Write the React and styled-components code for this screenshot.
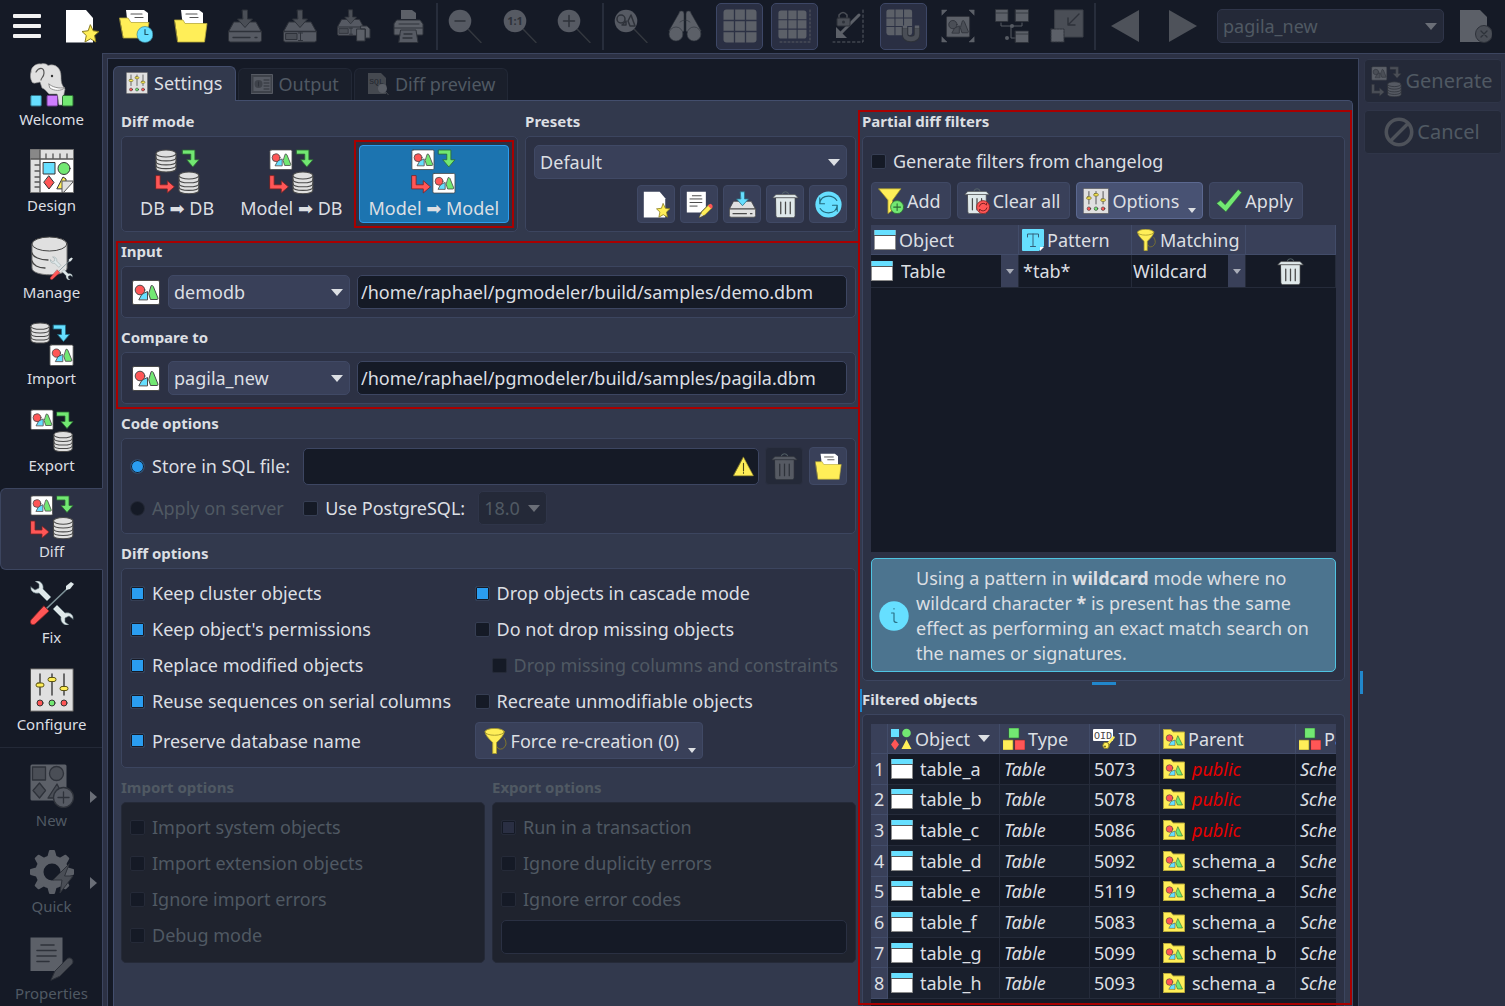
import React from "react";
import styled, { createGlobalStyle, css } from "styled-components";

const c = {
  dark: "#151a26",
  darkAlt: "#191f2c",
  panel: "#32394d",
  group: "#2c3144",
  groupOff: "#1f232e",
  control: "#394059",
  controlOff: "#242938",
  line: "#3c455f",
  lineSoft: "#252b3a",
  text: "#dcdfe3",
  textOff: "#505963",
  accent: "#2a9df0",
  mark: "#a80000",
};

const Global = createGlobalStyle`
  *, *::before, *::after { box-sizing: border-box; }
  body {
    margin: 0;
    background: ${c.dark};
    color: ${c.text};
    font: 18px/24px "Noto Sans", "DejaVu Sans", sans-serif;
    overflow: hidden;
  }
  button, input, select { font: inherit; color: inherit; margin: 0; }
  svg { display: block; flex: none; }
`;

/* ---------- Icons ---------- */

const full = {
  w: "#ffffff", l: "#e0e0e0", y: "#ffee58", g: "#72e872", r: "#ff5656",
  b: "#66dfff", v: "#cf7dff", s: "#dfe8ea", k: "#4a4a4a", ky: "#8a7d1e", n: "#35607a",
};
const grey = {
  w: "#5c6068", l: "#565a63", y: "#4a4e56", g: "#4a4e56", r: "#4a4e56",
  b: "#4a4e56", v: "#4a4e56", s: "#565a63", k: "#2e323a", ky: "#2e323a", n: "#2e323a",
};

const Svg = ({ s = 34, w, h, box = "0 0 34 34", children }) => (
  <svg width={w || s} height={h || s} viewBox={box} aria-hidden="true" strokeLinejoin="round" strokeLinecap="round">
    {children}
  </svg>
);

const Tile = ({ t = "", p = full }) => (
  <g transform={t} stroke={p.k} strokeWidth="1">
    <rect x=".5" y=".5" width="27" height="24" rx="1.500" fill={p.w} />
    <path d="M7 19.500 10 14 15.500 11.500V19.500Z" fill={p.b} />
    <path d="M19.500 5.500Q20.500 5 21.300 6.500L26 18.200Q26 19.500 25 19.500H18.500L16.800 14Z" fill={p.g} />
    <circle cx="8" cy="10" r="4.800" fill={p.r} />
  </g>
);

const Cyl = ({ t = "", p = full }) => (
  <g transform={t} stroke={p.k} strokeWidth="1.100" fill={p.l}>
    <path d="M1 4.500V19.500C1 24 21 24 21 19.500V4.500Z" />
    <ellipse cx="11" cy="4.500" rx="10" ry="3.500" />
    <path d="M1 8.500C1 13 21 13 21 8.500M1 12.500C1 17 21 17 21 12.500M1 16.200C1 20.700 21 20.700 21 16.200" fill="none" />
  </g>
);

const Down = ({ t = "", f = full.g, k = "#2c6b33" }) => (
  <path transform={t} d="M1 1H13V10.500H17L11 17.500 5 10.500H9V5H1Z" fill={f} stroke={k} strokeWidth=".8" />
);
const Right = ({ t = "", f = full.r, k = "#7a2424" }) => (
  <path transform={t} d="M1 1H5V10H12V6L19 12 12 18V14H1Z" fill={f} stroke={k} strokeWidth=".8" />
);

const Transfer = ({ from = "tile", to = "cyl", s = 44, p = full }) => (
  <Svg s={s} box="0 0 44 44">
    {from === "tile" ? <Tile t="translate(.5 .5) scale(.8)" p={p} /> : <Cyl t="translate(0 0) scale(.98)" p={p} />}
    <Down t="translate(26 0)" f={p.g} k={p === full ? "#2c6b33" : p.k} />
    <Right t="translate(0 25)" f={p.r} k={p === full ? "#7a2424" : p.k} />
    {to === "tile" ? <Tile t="translate(21 23.500) scale(.8)" p={p} /> : <Cyl t="translate(22.500 21.500) scale(.97)" p={p} />}
  </Svg>
);

const ImportIcon = () => (
  <Svg s={44} box="0 0 44 44">
    <Cyl t="translate(0 0) scale(.92)" />
    <Down t="translate(22.500 2)" f={full.b} k="#1e6d86" />
    <Tile t="translate(19.500 22.500) scale(.86)" />
  </Svg>
);
const ExportIcon = () => (
  <Svg s={44} box="0 0 44 44">
    <Tile t="translate(.5 .5) scale(.82)" />
    <Down t="translate(26 2)" />
    <Cyl t="translate(23 21.500) scale(.92)" />
  </Svg>
);

const Elephant = () => (
  <Svg s={44} box="0 0 44 44">
    <path d="M1 9C1 4 6 0 11 1C14 0 17 1 18 2.500C25 0 31 5 31 13C31 20 32 22 35 26C34 31 33 35 33 42H29C28 36 28 33 27 31H19C16 28 15 26 12 25L10 19C6 20 3 21 2 19C0 15 0 12 1 9Z" fill="#e0e0e0" stroke="#8a8a8a" strokeWidth=".6" />
    <path d="M6 9C9 4 14 4 14 10C14 14 11 15 11 17" fill="none" stroke="#555" strokeWidth="1.200" />
    <path d="M19 21C22 24 29 26 35 24.500C31 28.500 24 28 20 25Z" fill="#fff" stroke="#777" strokeWidth=".8" />
    <circle cx="22" cy="13" r="1.200" fill="#333" />
    <rect x=".8" y="32.500" width="10.500" height="10.500" rx="1" fill={full.b} stroke="#2f7185" />
    <rect x="17" y="32.500" width="10.500" height="10.500" rx="1" fill={full.v} stroke="#6c3c8c" />
    <rect x="32.500" y="32.500" width="10.500" height="10.500" rx="1" fill={full.g} stroke="#2c6b33" />
  </Svg>
);

const DesignIcon = () => (
  <Svg s={44} box="0 0 44 44">
    <rect x=".5" y=".5" width="43" height="43" fill="#fff" stroke="#777" />
    <path d="M1 1H43V10H10V43H1Z" fill="#e0e0e0" />
    <rect x="1" y="1" width="9" height="9" fill="#888" />
    <path d="M10 1V43M1 10H43M16 5V9M23 5V9M30 5V9M37 5V9M5 16H9M5 22H9M5 28H9M5 33H9M5 38H9" stroke="#555" fill="none" strokeWidth="1.300" />
    <rect x="13.500" y="13.500" width="11.500" height="11.500" fill={full.b} stroke="#333" />
    <circle cx="34" cy="19.500" r="6" fill={full.g} stroke="#333" />
    <path d="M19 27 24 33.500 19 40 14 33.500Z" fill={full.r} stroke="#333" />
    <path d="M27 39.500 33 28 36 30V39.500Z" fill={full.y} stroke="#333" />
    <path d="M32 43V32H43V33L34 43Z" fill="#e0e0e0" stroke="#555" />
  </Svg>
);

const wrench = "M1 6 5 9 9 7 9 3 5 0C10-1 14 3 13 8L21 16 17 20 9 12C4 13 0 10 1 6Z";
const ToolsCross = ({ t = "" }) => (
  <g transform={t}>
    <path d={wrench} fill="#dfe8ea" stroke="#60757a" strokeWidth=".6" />
    <path d={wrench} transform="translate(44 44) rotate(180)" fill="#dfe8ea" stroke="#60757a" strokeWidth=".6" />
    <path d="M16 28 37 8" stroke="#7c9096" strokeWidth="1.600" />
    <path d="M36 5 41 1 44 3 40 8 36 9Z" fill="#dfe8ea" />
    <path d="M14 25 19 30 5 43C2 45-1 42 1 39Z" fill={full.r} stroke="#8e2222" strokeWidth=".8" />
  </g>
);
const FixIcon = () => <Svg s={44} box="0 0 44 44"><ToolsCross /></Svg>;
const ManageIcon = () => (
  <Svg s={44} box="0 0 44 44">
    <path d="M2 8V32C2 41 37 41 37 32V8Z" fill="#e0e0e0" stroke="#777" />
    <ellipse cx="19.500" cy="8" rx="17.500" ry="7" fill="#e0e0e0" stroke="#444" />
    <path d="M2 17C3 21 10 24 18 24M2 25C3 29 8 32 15 32" stroke="#444" fill="none" strokeWidth="1.300" />
    <ToolsCross t="translate(20 21) scale(.52)" />
  </Svg>
);

const Sliders = ({ s = 44, p = full }) => (
  <Svg s={s} box="0 0 44 44">
    <rect x=".8" y=".8" width="42.400" height="42.400" fill={p.l} stroke={p.k} strokeWidth="1" />
    <path d="M10 6V27M22 6V27M34 6V27" stroke="#444" strokeWidth="1.500" />
    <rect x="6" y="15" width="8" height="4" rx="2" fill={p.y} stroke="#5c5414" />
    <rect x="18" y="9.500" width="8" height="4" rx="2" fill={p.y} stroke="#5c5414" />
    <rect x="30" y="18.500" width="8" height="4" rx="2" fill={p.y} stroke="#5c5414" />
    <circle cx="10" cy="35" r="3" fill={p.r} stroke="#333" />
    <circle cx="22" cy="35" r="3" fill={p.g} stroke="#333" />
    <circle cx="34" cy="35" r="3" fill={p.r} stroke="#333" />
  </Svg>
);

const NewObj = () => (
  <Svg s={44} box="0 0 44 44">
    <rect x=".5" y=".5" width="36" height="36" rx="1.500" fill={grey.w} />
    <g fill={grey.y} stroke={grey.k} strokeWidth="1.300">
      <rect x="2.500" y="3" width="13" height="13" />
      <circle cx="26.500" cy="9.500" r="7" />
      <path d="M9.500 19 15.500 26.500 9.500 34 3 26.500ZM18 34 27 20 34 34Z" />
      <circle cx="33.500" cy="33.500" r="10" fill={grey.l} />
      <path d="M28 33.500H39M33.500 28V39" />
    </g>
  </Svg>
);
const Gear = () => (
  <Svg s={44} box="0 0 44 44">
    <g fill={grey.w}>
      {[0, 45, 90, 135, 180, 225, 270, 315].map((a) => (
        <path key={a} d="M18 8 20 1H24L26 8Z" stroke={grey.w} strokeWidth="2" transform={`rotate(${a} 22 22)`} />
      ))}
    </g>
    <circle cx="22" cy="22" r="12.500" fill="none" stroke={grey.w} strokeWidth="8" />
    <path d="M39 14 23 30H32L30 43 43 26H35Z" fill={grey.y} stroke={grey.k} />
  </Svg>
);
const Props = () => (
  <Svg s={44} box="0 0 44 44">
    <path d="M.5.5H32.500V26L25 34H.5Z" fill={grey.w} />
    <path d="M11 8H24M7 13.500H26M7 19H26M7 24.500H19" stroke={grey.k} strokeWidth="1.600" />
    <path d="M21 43 25 34 37 22C40 19 45 23 42 27L30 39Z" fill={grey.y} stroke={grey.k} />
  </Svg>
);

const star = "M25.500 16 28.200 21.800 34 22.500 29.600 26.500 30.800 33 25.500 29.800 20 33 21.300 26.500 17 22.500 22.800 21.800Z";
const NewFile = ({ s }) => (
  <Svg s={s}>
    <path d="M1 1H21L28 9V33.500H1Z" fill="#fff" />
    <path d={star} fill={full.y} stroke={full.ky} />
  </Svg>
);
const Folder = ({ s, clock }) => (
  <Svg s={s}>
    <path d="M7 1H25L29 4V18H9Z" fill="#fff" />
    <path d="M12 5H23M16 8.500H24" stroke="#555" strokeWidth="1.200" />
    <path d={clock ? "M.8 9H9L12 13.500H30L27 29H4.500Z" : "M.8 11H9L11 14.500H33L30.500 33H4Z"} fill={full.y} stroke="#b8a93a" strokeWidth=".8" />
    {clock && (
      <g>
        <circle cx="26" cy="25.500" r="8" fill={full.b} stroke="#2f7185" strokeWidth=".6" />
        <path d="M26 20.500V25.500H29" fill="none" stroke="#1f5666" strokeWidth="1.200" />
      </g>
    )}
  </Svg>
);
const Disk = ({ s, p = full, kind }) => (
  <Svg s={s}>
    <g transform={kind === "as" ? "scale(.8)" : ""} stroke={p.k} strokeWidth="1">
      <path d="M6 13H28L33.500 23V31Q33.500 33 31.500 33H2.500Q.5 33 .5 31V23Z" fill={p.l} />
      <path d={kind ? "M.5 22.500H33.500" : "M.5 22.500H33.500M5 28.500H22M27 28.500H29"} fill="none" strokeWidth="1.300" />
      <path d="M14.500 1H19.500V10H24.500L17 18.500 9.500 10H14.500Z" fill={p.b} stroke={p === full ? "#2f7185" : p.k} />
      {kind && <path d="M3 24.500H14V30.500H3ZM15.500 24H19.500M15.500 31.500H19.500M17.500 24V31.500" fill={p.y} />}
    </g>
    {kind === "as" && (
      <path d="M20 20H28V32H20ZM24 17H30L33 20V29H28.500V20H24Z" fill={p.w} stroke={p.k} />
    )}
  </Svg>
);
const Printer = () => (
  <Svg>
    <path d="M9 10V1H20L24 4V10" fill={grey.w} />
    <path d="M5 11H28L31 15V25Q31 26 30 26H3Q2 26 2 25V15Z" fill={grey.w} stroke={grey.k} />
    <path d="M2 19H31M7 15H27" stroke={grey.k} />
    <path d="M9 21H24L26 33.500H7Z" fill={grey.l} stroke={grey.k} />
    <path d="M12 25H20M11 29H20" stroke={grey.k} strokeWidth="1.300" />
  </Svg>
);
const Lens = ({ children }) => (
  <Svg>
    <path d="M20 20 33 33.500" stroke="#34383f" strokeWidth="1.400" />
    <circle cx="12" cy="12" r="11.300" fill={grey.l} />
    <g stroke={grey.k} fill="none" strokeWidth="1.500">{children}</g>
  </Svg>
);
const Binoculars = () => (
  <Svg>
    <g fill={grey.w} stroke={grey.k} strokeWidth=".6">
      <path d="M11 4Q11 2 13 2H14Q16 2 16 5V22L8 27 1 22ZM23 4Q23 2 21 2H20Q18 2 18 5V22L26 27 33 22Z" />
      <circle cx="8" cy="25" r="7" /><circle cx="26" cy="25" r="7" />
      <path d="M12 13Q17 9 22 13" fill="none" />
    </g>
  </Svg>
);
const Grid9 = ({ t = "" }) => (
  <g transform={t}>
    <rect x=".5" y=".5" width="33" height="33" rx="3" fill={grey.w} />
    <path d="M11.500.5V33.500M22.500.5V33.500M.5 11.500H33.500M.5 22.500H33.500" stroke="#2c3144" strokeWidth="1.300" />
  </g>
);
const GridLimit = () => (
  <Svg><Grid9 t="translate(1 1) scale(.85)" /><path d="M33 1V33H1" fill="none" stroke="#565a63" strokeDasharray="2 2" /></Svg>
);
const LockArrow = () => (
  <Svg>
    <path d="M31 1V33H1" fill="none" stroke="#565a63" strokeDasharray="2.500 2.500" />
    <path d="M27 6 9 24" stroke={grey.w} strokeWidth="3" />
    <path d="M4 29V18L15 29Z" fill={grey.w} />
    <path d="M7 9V6Q11 1 15 6V9" fill="none" stroke={grey.y} strokeWidth="1.500" />
    <rect x="5" y="9" width="13" height="8" rx="1" fill={grey.y} stroke={grey.k} />
    <circle cx="11.500" cy="13" r="1.500" fill={grey.k} />
  </Svg>
);
const GridMagnet = () => (
  <Svg>
    <Grid9 t="scale(.78)" />
    <path d="M19 18V25Q19 30 25 30Q31 30 31 25V18" fill="none" stroke={grey.k} strokeWidth="6.500" strokeLinecap="butt" />
    <path d="M19 20V25Q19 30 25 30Q31 30 31 25V20" fill="none" stroke={grey.y} strokeWidth="4.500" strokeLinecap="butt" />
    <path d="M16.800 18H21.200M28.800 18H33.200" stroke={grey.w} strokeWidth="3" strokeLinecap="butt" />
  </Svg>
);
const FitTile = () => (
  <Svg>
    <path d="M1 1H6L1 6ZM33 1H28L33 6ZM1 33H6L1 28ZM33 33H28L33 28Z" fill={grey.w} stroke={grey.w} strokeWidth=".5" />
    <Tile t="translate(5 7) scale(.86)" p={grey} />
  </Svg>
);
const Relations = () => (
  <Svg>
    <path d="M6 14V17H27V14M16 17V29H22" stroke={grey.l} fill="none" />
    <circle cx="17" cy="17" r="2" fill={grey.l} /><circle cx="12" cy="29" r="2" fill={grey.l} />
    <g fill={grey.w} stroke={grey.k} strokeWidth=".8">
      <path d="M.5.5H13V12.500H.5ZM20.500.5H33.500V12.500H20.500ZM20.500 22H33.500V33.500H20.500ZM.5 4H13M20.500 4H33.500M20.500 25H33.500" />
    </g>
  </Svg>
);
const Overview = () => (
  <Svg>
    <rect x="5" y="1" width="28" height="27" fill={grey.y} stroke="#3c4048" />
    <path d="M29 5 18 16M18 9V16H25" fill="none" stroke={grey.k} strokeWidth="1.400" />
    <rect x="1" y="20" width="13" height="13" fill={grey.w} stroke={grey.k} strokeDasharray="2 1" />
  </Svg>
);
const Tri = ({ left }) => <Svg><path d={left ? "M31 1V33L3 17Z" : "M3 1V33L31 17Z"} fill="#4e525a" /></Svg>;
const CloseFile = () => (
  <Svg>
    <path d="M2 1H22L29 8V33H2Z" fill={grey.w} />
    <circle cx="26" cy="25" r="8.500" fill={grey.y} stroke={grey.k} />
    <path d="M23 22 29 28M29 22 23 28" stroke={grey.k} strokeWidth="1.300" />
  </Svg>
);
const EditFile = ({ s }) => (
  <Svg s={s}>
    <path d="M1 1H25V20L18 27H1Z" fill="#fff" />
    <path d="M8 6H19M5 10H20M5 14.500H20M5 19H14" stroke="#444" strokeWidth="1.200" />
    <path d="M17 33 20 26 29 17 33 21 24 30Z" fill={full.y} stroke={full.ky} strokeWidth=".8" />
    <path d="M27.500 18.500 31.500 22.500 33.500 20.500Q34 17 30.500 16Z" fill={full.r} />
    <path d="M17 33 19 28.500 21.500 31Z" fill="#ddd" />
  </Svg>
);
const Trash = ({ s = 27, p = full, reset }) => (
  <Svg s={s}>
    <path d="M13 4Q13 1 17 1Q21 1 21 4" fill="none" stroke="#59666b" strokeWidth="1.200" />
    <path d="M1 8.500 5 4.500H29L33 8.500Z" fill={p.s} stroke={p.k} strokeWidth=".8" />
    <path d="M5 8.500H29V31Q29 33.500 27 33.500H7Q5 33.500 5 31Z" fill={p.s} stroke={p.k} strokeWidth=".8" />
    <path d="M11 14V28.500M17 14V28.500M23 14V28.500" stroke={p.k} strokeWidth="1.600" />
    {reset && (
      <g>
        <circle cx="25" cy="25" r="8.500" fill={full.r} stroke="#7c2222" />
        <path d="M20 24Q21 20 25 20Q28 20 29.500 22.500V20M30 26Q29 30 25 30Q22 30 20.500 27.500V30" fill="none" stroke="#7c2222" strokeWidth="1.300" />
      </g>
    )}
  </Svg>
);
const Refresh = ({ s }) => (
  <Svg s={s}>
    <circle cx="17" cy="17" r="16.500" fill={full.b} />
    <path d="M6 16Q7 6.500 17 6.500Q24 6.500 27.500 12M28 18Q27 27.500 17 27.500Q10 27.500 6.500 22M6 8.500V16H12M28 25.500V18H22" fill="none" stroke="#23697c" strokeWidth="1.400" />
  </Svg>
);
const Warning = () => (
  <Svg s={21}>
    <path d="M17 2 33 32H1Z" fill={full.y} stroke="#a3962e" />
    <path d="M17 12V24M17 27V28" stroke="#4d4718" strokeWidth="1.800" />
  </Svg>
);
const Funnel = ({ s = 26, kind }) => (
  <Svg s={s}>
    {kind === "add" ? (
      <path d="M1 1H30L19 16V29L13 33.500V16Z" fill={full.y} stroke="#a3962e" />
    ) : (
      <g stroke="#a3962e" strokeWidth="1.200">
        <path d="M29 13Q35 22 27 27Q21 29 20 25" fill="none" stroke="#857a2a" />
        <path d="M4 5Q4 10 14 19V33.500H19V19Q29 10 29 5Z" fill={full.y} />
        <ellipse cx="16.500" cy="5" rx="12.500" ry="4.500" fill={full.y} />
      </g>
    )}
    {kind === "add" && (
      <g stroke="#2c6b33">
        <circle cx="25" cy="25" r="8.500" fill={full.g} />
        <path d="M20.500 25H29.500M25 20.500V29.500" strokeWidth="1.400" />
      </g>
    )}
  </Svg>
);
const Check = () => <Svg s={26}><path d="M1 20 6 16 12 22 29 2 33.500 6 13 31Z" fill={full.g} stroke="#2c6b33" strokeWidth=".7" /></Svg>;
const Win = () => (
  <Svg s={22} box="0 0 22 22">
    <rect x=".5" y="1.500" width="21" height="19" fill="#fff" stroke="#8b8b8b" />
    <path d="M.5 1H21.500V6H.5Z" fill={full.b} />
    <path d="M.5 6.500H21.500" stroke="#555" />
  </Svg>
);
const TextIcon = () => (
  <Svg s={22} box="0 0 22 22">
    <path d="M0 1Q0 0 1 0H21Q22 0 22 1V17L17 22H1Q0 22 0 21Z" fill={full.b} />
    <path d="M18 22V18H22Z" fill="#fff" />
    <path d="M5.500 8V5H16.500V8M11 5V17.500M8.500 17.500H13.500" fill="none" stroke={full.n} />
  </Svg>
);
const Blocks = () => (
  <Svg s={22} box="0 0 22 22">
    <rect x="6" y="0" width="10" height="10" fill={full.g} stroke="#2c6b33" strokeWidth=".6" />
    <rect x="0" y="12" width="10" height="10" fill={full.y} stroke="#857a2a" strokeWidth=".6" />
    <rect x="12" y="12" width="10" height="10" fill={full.r} stroke="#7c2222" strokeWidth=".6" />
  </Svg>
);
const Objects = () => (
  <Svg s={22} box="0 0 22 22">
    <rect x="1" y="1" width="8" height="8" fill={full.b} />
    <circle cx="16.500" cy="5" r="4.300" fill={full.g} />
    <path d="M5 11 9 16.500 5 22 1 16.500Z" fill={full.r} />
    <path d="M16.500 11.500 21.500 21H11.500Z" fill={full.y} />
  </Svg>
);
const Oid = () => (
  <Svg s={22} box="0 0 22 22">
    <rect x="0" y="1" width="20" height="12" rx="1" fill="#fff" />
    <text x="10" y="10.500" textAnchor="middle" fontSize="10" fontFamily="Liberation Mono, monospace" fill="#444">OID</text>
    <path d="M20.500 9.500 15 16" stroke={full.y} strokeWidth="2.500" />
    <circle cx="13" cy="17.500" r="3.200" fill={full.y} stroke="#857a2a" />
    <circle cx="12" cy="18.500" r="1" fill="#6b6120" />
  </Svg>
);
const Schema = () => (
  <Svg s={22} box="0 0 22 22">
    <path d="M.5 1.500H8L10 4H21.500V20.500H.5Z" fill={full.y} stroke="#b8a93a" />
    <circle cx="6.500" cy="10" r="3.300" fill={full.r} stroke="#444" strokeWidth=".6" />
    <path d="M6 17 8 13.500 12 12V17Z" fill={full.b} stroke="#444" strokeWidth=".5" />
    <path d="M15 8 19.500 17H14.500L13 13Z" fill={full.g} stroke="#2c6b33" strokeWidth=".6" />
  </Svg>
);
const OutputIcon = () => (
  <Svg s={22} box="0 0 22 22">
    <rect x=".5" y="1.500" width="21" height="19" fill="#3e424a" stroke="#565a63" />
    <rect x="2.500" y="4" width="17" height="14" fill={grey.l} />
    <circle cx="7.500" cy="11" r="4" fill="#3e424a" />
    <path d="M7.500 9V13M13 7H18M13 10H18M13 13H18M13 16H18" stroke={grey.k} />
  </Svg>
);
const SqlIcon = () => (
  <Svg s={22} box="0 0 22 22">
    <path d="M1 0H14L19 5V21H1Z" fill="#454950" />
    <text x="9.500" y="11" textAnchor="middle" fontSize="8" fontFamily="Liberation Mono, monospace" fill="#22262e">SQL</text>
    <circle cx="15.500" cy="15.500" r="4.500" fill="#5a5e66" />
    <path d="M19 19 21.500 22" stroke="#454950" />
  </Svg>
);
const Ban = () => (
  <Svg s={30} box="0 0 30 30">
    <circle cx="15" cy="15" r="12.700" fill="none" stroke="#4e525a" strokeWidth="3.600" />
    <path d="M7 23.500 23.500 7" stroke="#4e525a" strokeWidth="3.400" />
  </Svg>
);
const Info = () => (
  <Svg s={30} box="0 0 30 30">
    <circle cx="15" cy="15" r="14.700" fill={full.b} />
    <path d="M12.500 12H15V19.500Q15 21.500 18 21.500M15 7.500V8" fill="none" stroke="#2b7389" strokeWidth="1.200" />
  </Svg>
);
const Burger = () => (
  <Svg>
    <g fill="#f2f2f2">
      <rect x="3" y="5" width="28" height="4" rx="1" />
      <rect x="3" y="15" width="28" height="4" rx="1" />
      <rect x="3" y="25" width="28" height="4" rx="1" />
    </g>
  </Svg>
);

/* ---------- Page frame ---------- */

const Page = styled.div`
  display: flex;
  flex-direction: column;
  height: 100vh;
`;
const Toolbar = styled.header`
  display: flex;
  flex: none;
  align-items: center;
  height: 53px;
  padding: 0 3px 1px 0;
`;
const ToolGroup = styled.div`
  flex: ${(p) => p.$n} 1 0;
  display: grid;
  grid-auto-flow: column;
  grid-auto-columns: minmax(0, 1fr);
  justify-items: center;
`;
const ToolButton = styled.button`
  display: grid;
  place-items: center;
  width: 47px;
  height: 47px;
  padding: 0;
  background: ${(p) => (p.$on ? "#2a2f43" : "transparent")};
  border: 1px solid ${(p) => (p.$on ? "#3d4766" : "transparent")};
  border-radius: 5px;
`;
const ToolRule = styled.span`
  width: 2px;
  height: 47px;
  background: #272d3b;
`;
const ToolArrows = styled(ToolGroup)`
  flex: none;
  width: 116px;
  margin-right: 5px;
`;
const ToolEnd = styled.div`
  flex: none;
  width: 54px;
  margin-left: 4px;
  display: grid;
  justify-items: center;
`;
const Frame = styled.div`
  flex: 1;
  min-height: 0;
  display: flex;
`;
const Sidebar = styled.nav`
  flex: none;
  width: 102px;
  padding-top: 3px;
`;
const SideGroup = styled.div`
  display: grid;
  grid-template-rows: repeat(${(p) => p.$n}, 1fr);
  height: ${(p) => p.$h}px;
`;
const SideButton = styled.button`
  position: relative;
  display: flex;
  flex-direction: column;
  align-items: center;
  width: 103px;
  height: 82px;
  padding: 6px 0 0;
  font-size: 15px;
  line-height: 25px;
  color: ${(p) => (p.disabled ? c.textOff : c.text)};
  background: ${(p) => (p.$on ? c.group : "transparent")};
  border: 1px solid ${(p) => (p.$on ? c.line : "transparent")};
  border-right-color: ${(p) => (p.$on ? c.group : "transparent")};
  border-radius: 6px 0 0 6px;
  z-index: ${(p) => (p.$on ? 1 : 0)};
`;
const Flyout = styled.span`
  position: absolute;
  right: 5px;
  top: 33px;
  border-left: 7px solid #6a6e77;
  border-block: 6px solid transparent;
`;
const SideRule = styled.hr`
  width: 100%;
  margin: 0 0 9px;
  border: 0;
  border-top: 1px solid #232937;
`;
const Main = styled.main`
  flex: 1;
  min-width: 0;
  display: flex;
  background: ${c.group};
  border: solid ${c.line};
  border-width: 1px 0 0 1px;
  padding: 4px 0 0 4px;
`;
const Stage = styled.div`
  flex: 1;
  min-width: 0;
  display: flex;
  flex-direction: column;
  background: ${c.dark};
  border: 1px solid ${c.line};
  border-bottom: 0;
  padding: 7px 5px 0;
`;
const Tabs = styled.div`
  display: flex;
  align-items: flex-end;
  gap: 2px;
  margin-bottom: -1px;
`;
const Tab = styled.button`
  display: flex;
  align-items: center;
  gap: 6px;
  height: ${(p) => (p.$on ? 35 : 32)}px;
  margin-bottom: ${(p) => (p.$on ? 0 : 1)}px;
  padding: 0 12px 2px;
  color: ${(p) => (p.$on ? c.text : c.textOff)};
  background: ${(p) => (p.$on ? c.panel : "#1a1f2b")};
  border: 1px solid ${(p) => (p.$on ? "#434e6d" : "#222836")};
  border-bottom: 0;
  border-radius: 6px 6px 0 0;
  z-index: 1;
`;
const Panel = styled.div`
  flex: 1;
  min-height: 0;
  display: grid;
  grid-template-columns: minmax(0, 735fr) 6px minmax(0, 483fr);
  background: ${c.panel};
  border: 1px solid #434e6d;
  border-bottom: 0;
  border-radius: 0 5px 0 0;
  padding: 7px 7px 0;
`;
const Left = styled.div`
  display: flex;
  flex-direction: column;
  gap: 6px;
`;
const Splitter = styled.div`
  position: relative;
  &::after {
    content: "";
    position: absolute;
    top: 581px;
    right: 0;
    width: 3px;
    height: 23px;
    background: #2187cc;
  }
`;
const Marked = styled.div`
  position: relative;
  display: flex;
  flex-direction: column;
  gap: 6px;
  &::after {
    content: "";
    position: absolute;
    inset: 3px -4px -5px -5px;
    border: 2px solid ${c.mark};
    pointer-events: none;
  }
`;
const RightCol = styled(Marked)`
  gap: 0;
  min-height: 0;
  &::after { inset: 2px -7px 1px -4px; }
`;
const Row = styled.div`
  display: flex;
  gap: ${(p) => p.$gap ?? 7}px;
  align-items: ${(p) => p.$align || "stretch"};
  justify-content: ${(p) => p.$justify || "flex-start"};
`;
const GroupWrap = styled.section`
  display: flex;
  flex-direction: column;
  min-width: 0;
  min-height: 0;
  flex: ${(p) => p.$flex || "none"};
`;
const GroupTitle = styled.h2`
  margin: 0;
  height: 28px;
  font-size: 15px;
  line-height: 26px;
  font-weight: 700;
  color: ${(p) => (p.$off ? c.textOff : c.text)};
`;
const GroupBox = styled.div`
  flex: 1;
  min-height: 0;
  padding: 8px;
  border: 1px solid ${(p) => (p.$off ? "#252a38" : c.line)};
  border-radius: 5px;
  background: ${(p) => (p.$off ? c.groupOff : c.group)};
  ${(p) => p.$open && css`
    overflow: hidden;
    border-bottom: 0;
    border-radius: 5px 5px 0 0;
    padding: 9px 8px 0;
  `}
`;
const Group = ({ title, off, flex, open, children }) => (
  <GroupWrap $flex={flex} aria-label={title}>
    <GroupTitle $off={off}>{title}</GroupTitle>
    <GroupBox $off={off} $open={open}>{children}</GroupBox>
  </GroupWrap>
);

/* ---------- Controls ---------- */

const ModeButton = styled.button`
  position: relative;
  display: flex;
  flex-direction: column;
  align-items: center;
  gap: 2px;
  height: 78px;
  padding: 3px 9px 0;
  white-space: nowrap;
  background: ${(p) => (p.$on ? "#1c74b0" : "transparent")};
  border: 1px solid ${(p) => (p.$on ? c.accent : "transparent")};
  border-radius: 4px;
  ${(p) => p.$on && css`
    &::after {
      content: "";
      position: absolute;
      inset: -6px;
      border: 2px solid ${c.mark};
      pointer-events: none;
    }
  `}
`;
const SelectWrap = styled.span`
  position: relative;
  flex: none;
  display: flex;
  width: ${(p) => p.$w || "100%"};
  height: 34px;
  &::after {
    content: "";
    position: absolute;
    right: 7px;
    top: 14px;
    border-top: 7px solid ${(p) => (p.$off ? "#6a6e77" : c.text)};
    border-inline: 6px solid transparent;
    pointer-events: none;
  }
`;
const SelectBox = styled.select`
  appearance: none;
  width: 100%;
  padding: 0 24px 0 5px;
  opacity: 1;
  color: ${(p) => (p.disabled ? c.textOff : c.text)};
  background: ${(p) => (p.disabled ? c.controlOff : c.control)};
  border: 1px solid ${(p) => (p.disabled ? "#2f3549" : "#404965")};
  border-radius: 5px;
`;
const Select = ({ value, label, w, off }) => (
  <SelectWrap $w={w} $off={off}>
    <SelectBox aria-label={label} disabled={off}><option>{value}</option></SelectBox>
  </SelectWrap>
);
const Field = styled.span`
  flex: 1;
  min-width: 0;
  display: flex;
  align-items: center;
  height: ${(p) => p.$h || 34}px;
  padding: 0 4px 0 3px;
  background: ${c.dark};
  border: 1px solid ${(p) => (p.$off ? "#2a3042" : "#3d4662")};
  border-radius: 5px;
`;
const FieldInput = styled.input`
  flex: 1;
  min-width: 0;
  padding: 0;
  border: 0;
  outline: 0;
  background: transparent;
`;
const IconButton = styled.button`
  display: grid;
  place-items: center;
  flex: none;
  width: 38px;
  height: 38px;
  padding: 0;
  background: ${(p) => (p.disabled ? c.controlOff : c.control)};
  border: 1px solid ${(p) => (p.disabled ? "#2b3041" : "#404965")};
  border-radius: 4px;
`;
const ActionButton = styled.button`
  display: flex;
  align-items: center;
  gap: 3px;
  flex: none;
  height: 37px;
  padding: 0 ${(p) => (p.$menu ? 6 : 9)}px 0 6px;
  white-space: nowrap;
  background: ${(p) => (p.$hot ? "#485273" : c.control)};
  border: 1px solid ${(p) => (p.$hot ? "#5b6890" : "#404965")};
  border-radius: 4px;
`;
const MenuMark = styled.span`
  align-self: flex-end;
  margin: 0 0 5px 6px;
  border-top: 5px solid ${c.text};
  border-inline: 4px solid transparent;
`;
const Option = styled.label`
  display: flex;
  align-items: center;
  gap: 7px;
  min-height: 30px;
  padding-left: ${(p) => (p.$indent ? 17 : 0)}px;
  white-space: nowrap;
  color: ${(p) => (p.$off ? c.textOff : c.text)};
`;
const Tick = styled.input`
  appearance: none;
  flex: none;
  width: 15px;
  height: 15px;
  margin: 0;
  background: ${c.dark};
  border: 1px solid ${(p) => (p.disabled ? "#252a38" : "#363e53")};
  border-radius: ${(p) => (p.type === "radio" ? "50%" : "2px")};
  &:checked {
    background: ${(p) => (p.disabled ? "#2a2f43" : c.accent)};
    box-shadow: inset 0 0 0 1px ${c.dark};
  }
`;
const Box = ({ children, on, off, indent, type = "checkbox", name }) => (
  <Option $off={off} $indent={indent}>
    <Tick type={type} name={name} defaultChecked={on} disabled={off} />
    {children}
  </Option>
);
const InputIcon = styled.span`
  flex: none;
  display: grid;
  place-items: center;
  width: 31px;
`;
const CodeGrid = styled.div`
  display: grid;
  grid-template-columns: auto minmax(0, 1fr);
  gap: 6px;
  column-gap: 13px;
`;
const DiffGrid = styled.div`
  display: grid;
  grid-template-columns: minmax(0, 10fr) minmax(0, 11fr);
  gap: 6px;
  padding-top: 1px;
  align-items: center;
  justify-items: start;
`;
const Stack = styled.div`
  display: flex;
  flex-direction: column;
  gap: 6px;
`;
const ListStack = styled(Stack)`padding-top: 1px;`;

/* ---------- Filters ---------- */

const TableView = styled.div`
  height: ${(p) => (p.$h ? `${p.$h}px` : "100%")};
  overflow: hidden;
  background: ${c.dark};
`;
const Table = styled.table`
  table-layout: fixed;
  width: ${(p) => p.$w || "100%"};
  height: ${(p) => p.$h || "auto"};
  border-collapse: separate;
  border-spacing: 0;
  th, td {
    padding: 0;
    height: 30px;
    text-align: left;
    font-weight: 400;
    white-space: nowrap;
    overflow: hidden;
    border: solid ${c.lineSoft};
    border-width: 0 1px 1px 0;
  }
  thead th, tbody th {
    background: ${c.control};
    border-color: #424c69;
  }
  ${(p) => p.$striped && css`tbody tr:nth-child(even) td { background: ${c.darkAlt}; }`}
`;
const Cell = styled.div`
  display: flex;
  align-items: center;
  gap: ${(p) => p.$gap ?? 3}px;
  padding-left: ${(p) => p.$pad ?? 3}px;
  color: ${(p) => (p.$red ? "#e60000" : "inherit")};
  font-style: ${(p) => (p.$it ? "italic" : "normal")};
  justify-content: ${(p) => (p.$center ? "center" : "flex-start")};
`;
const CellSelect = styled.select`
  appearance: none;
  flex: 1;
  min-width: 0;
  height: 32px;
  padding: 0 0 0 1px;
  border: 0;
  background: transparent;
`;
const CellDrop = styled.span`
  display: grid;
  place-items: center;
  width: 17px;
  height: 32px;
  background: ${c.control};
  &::after {
    content: "";
    border-top: 5px solid #a9adb8;
    border-inline: 4px solid transparent;
  }
`;
const CellInput = styled(FieldInput)`width: 100%; padding-left: 4px;`;
const PlainButton = styled.button`
  padding: 0;
  border: 0;
  background: transparent;
`;
const SortMark = styled.span`
  margin-left: 5px;
  border-top: 7px solid ${c.text};
  border-inline: 6px solid transparent;
`;
const Notice = styled.div`
  display: flex;
  align-items: center;
  gap: 7px;
  height: 114px;
  padding: 1px 7px 0;
  line-height: 25px;
  background: #4c748f;
  border: 1px solid #4fc4e2;
  border-radius: 5px;
`;
const NoticeText = styled.p`margin: 0; flex: 1;`;
const Grip = styled.span`
  align-self: center;
  width: 24px;
  height: 3px;
  margin: 1px 0;
  background: #2187cc;
`;
const Aside = styled.aside`
  position: relative;
  flex: none;
  display: flex;
  flex-direction: column;
  gap: 7px;
  width: 146px;
  padding: 1px 3px 0 5px;
  &::before {
    content: "";
    position: absolute;
    left: 1px;
    top: 613px;
    width: 3px;
    height: 23px;
    background: #2187cc;
  }
`;
const RunButton = styled.button`
  display: flex;
  align-items: center;
  justify-content: center;
  gap: 3px;
  height: 44px;
  padding: 0 2px 0 0;
  font-size: 20px;
  color: ${c.textOff};
  background: ${c.controlOff};
  border: 1px solid #2f3548;
  border-radius: 4px;
`;

const sideTop = [
  ["Welcome", <Elephant />], ["Design", <DesignIcon />], ["Manage", <ManageIcon />], ["Import", <ImportIcon />],
  ["Export", <ExportIcon />], ["Diff", <Transfer />], ["Fix", <FixIcon />], ["Configure", <Sliders />],
];
const sideBottom = [["New", <NewObj />, true], ["Quick", <Gear />, true], ["Properties", <Props />, false]];

const fileTools = [
  ["Menu", <Burger />],
  ["New model", <NewFile />], ["Recent models", <Folder clock />], ["Open", <Folder />],
  ["Save", <Disk p={grey} />, , true], ["Save as", <Disk p={grey} kind="name" />, , true],
  ["Save all", <Disk p={grey} kind="as" />, , true], ["Print", <Printer />, , true],
];
const zoomTools = [
  ["Zoom out", <Lens><path d="M7 12H17" /></Lens>, , true],
  ["Normal zoom", <Lens><text x="12" y="16" textAnchor="middle" fontSize="11" fontWeight="700" fontFamily="Noto Sans, sans-serif" fill={grey.k} stroke="none">1:1</text></Lens>, , true],
  ["Zoom in", <Lens><path d="M6.500 12H17.500M12 6.500V17.500" /></Lens>, , true],
];
const viewTools = [
  ["Magnifier", <Lens><circle cx="7" cy="10" r="4" /><path d="M8 16 12 12V16ZM17 6 21 17H16L14 12Z" /></Lens>, , true],
  ["Find", <Binoculars />, , true],
  ["Show grid", <Svg><Grid9 /></Svg>, true, true],
  ["Show delimiters", <GridLimit />, true, true],
  ["Lock delimiter scale", <LockArrow />, , true],
  ["Align to grid", <GridMagnet />, true, true],
  ["Expand canvas", <FitTile />, , true],
  ["Arrange objects", <Relations />, , true],
  ["Overview", <Overview />, , true],
];
const Tools = ({ items }) => (
  <ToolGroup $n={items.length}>
    {items.map(([name, icon, on, off]) => (
      <ToolButton key={name} aria-label={name} $on={on} disabled={off}>{icon}</ToolButton>
    ))}
  </ToolGroup>
);

const objects = [
  ["table_a", "5073", "public"], ["table_b", "5078", "public"], ["table_c", "5086", "public"],
  ["table_d", "5092", "schema_a"], ["table_e", "5119", "schema_a"], ["table_f", "5083", "schema_a"],
  ["table_g", "5099", "schema_b"], ["table_h", "5093", "schema_a"],
];
const presetTools = [
  ["New preset", <NewFile s={27} />], ["Edit preset", <EditFile s={27} />], ["Save preset", <Disk s={27} />],
  ["Delete preset", <Trash />], ["Reload presets", <Refresh s={27} />],
];

const ModelSource = ({ title, model, path }) => (
  <Group title={title}>
    <Row>
      <InputIcon><Svg w={28} h={25} box="0 0 28 25"><Tile /></Svg></InputIcon>
      <Select w="182px" value={model} label={`${title} model`} />
      <Field><FieldInput aria-label={`${title} path`} defaultValue={path} /></Field>
    </Row>
  </Group>
);

export default function App() {
  return (
    <Page>
      <Global />
      <Toolbar>
        <Tools items={fileTools} />
        <ToolRule />
        <Tools items={zoomTools} />
        <ToolRule />
        <Tools items={viewTools} />
        <ToolRule />
        <ToolArrows>
          <ToolButton aria-label="Previous model" disabled><Tri left /></ToolButton>
          <ToolButton aria-label="Next model" disabled><Tri /></ToolButton>
        </ToolArrows>
        <Select w="227px" value="pagila_new" label="Current model" off />
        <ToolEnd><ToolButton aria-label="Close model" disabled><CloseFile /></ToolButton></ToolEnd>
      </Toolbar>
      <Frame>
        <Sidebar>
          <SideGroup $n={8} $h={691}>
            {sideTop.map(([name, icon]) => (
              <SideButton key={name} $on={name === "Diff"}>{icon}{name}</SideButton>
            ))}
          </SideGroup>
          <SideRule />
          <SideGroup $n={3} $h={259}>
            {sideBottom.map(([name, icon, more]) => (
              <SideButton key={name} disabled>{icon}{name}{more && <Flyout />}</SideButton>
            ))}
          </SideGroup>
        </Sidebar>
        <Main>
          <Stage>
            <Tabs role="tablist">
              <Tab role="tab" aria-selected="true" $on><Sliders s={22} />Settings</Tab>
              <Tab role="tab" disabled><OutputIcon />Output</Tab>
              <Tab role="tab" disabled><SqlIcon />Diff preview</Tab>
            </Tabs>
            <Panel>
              <Left>
                <Row>
                  <Group title="Diff mode">
                    <Row $gap={6}>
                      <ModeButton><Transfer from="cyl" s={45} />DB ➡ DB</ModeButton>
                      <ModeButton><Transfer s={45} />Model ➡ DB</ModeButton>
                      <ModeButton $on><Transfer to="tile" s={45} />Model ➡ Model</ModeButton>
                    </Row>
                  </Group>
                  <Group title="Presets" flex="1">
                    <Stack>
                      <Select value="Default" label="Preset" />
                      <Row $gap={5} $justify="flex-end">
                        {presetTools.map(([name, icon]) => <IconButton key={name} aria-label={name}>{icon}</IconButton>)}
                      </Row>
                    </Stack>
                  </Group>
                </Row>
                <Marked>
                  <ModelSource title="Input" model="demodb" path="/home/raphael/pgmodeler/build/samples/demo.dbm" />
                  <ModelSource title="Compare to" model="pagila_new" path="/home/raphael/pgmodeler/build/samples/pagila.dbm" />
                </Marked>
                <Group title="Code options">
                  <CodeGrid>
                    <Box type="radio" name="target" on>Store in SQL file:</Box>
                    <Row $gap={6} $align="center">
                      <Field $h={37}><FieldInput aria-label="SQL file" /><Warning /></Field>
                      <IconButton aria-label="Clear file" disabled><Trash p={grey} /></IconButton>
                      <IconButton aria-label="Select file"><Folder s={27} /></IconButton>
                    </Row>
                    <Box type="radio" name="target" off>Apply on server</Box>
                    <Row $gap={13} $align="center">
                      <Box>Use PostgreSQL:</Box>
                      <Select w="69px" value="18.0" label="PostgreSQL version" off />
                    </Row>
                  </CodeGrid>
                </Group>
                <Group title="Diff options">
                  <DiffGrid>
                    <Box on>Keep cluster objects</Box>
                    <Box on>Drop objects in cascade mode</Box>
                    <Box on>Keep object's permissions</Box>
                    <Box>Do not drop missing objects</Box>
                    <Box on>Replace modified objects</Box>
                    <Box off indent>Drop missing columns and constraints</Box>
                    <Box on>Reuse sequences on serial columns</Box>
                    <Box>Recreate unmodifiable objects</Box>
                    <Box on>Preserve database name</Box>
                    <ActionButton $menu><Funnel />Force re-creation (0)<MenuMark /></ActionButton>
                  </DiffGrid>
                </Group>
                <Row>
                  <Group title="Import options" off flex="1">
                    <ListStack>
                      <Box off>Import system objects</Box>
                      <Box off>Import extension objects</Box>
                      <Box off>Ignore import errors</Box>
                      <Box off>Debug mode</Box>
                    </ListStack>
                  </Group>
                  <Group title="Export options" off flex="1">
                    <ListStack>
                      <Box off on>Run in a transaction</Box>
                      <Box off>Ignore duplicity errors</Box>
                      <Box off>Ignore error codes</Box>
                      <Row><Field $off><FieldInput aria-label="Error codes" disabled /></Field></Row>
                    </ListStack>
                  </Group>
                </Row>
              </Left>
              <Splitter />
              <RightCol>
                <Group title="Partial diff filters">
                  <ListStack>
                    <Box>Generate filters from changelog</Box>
                    <Row $gap={6}>
                      <ActionButton><Funnel kind="add" />Add</ActionButton>
                      <ActionButton><Trash s={26} reset />Clear all</ActionButton>
                      <ActionButton $menu $hot><Sliders s={26} />Options<MenuMark /></ActionButton>
                      <ActionButton><Check />Apply</ActionButton>
                    </Row>
                    <TableView $h={327}>
                      <Table>
                        <colgroup><col width="148" /><col width="113" /><col width="114" /><col /></colgroup>
                        <thead>
                          <tr>
                            <th><Cell><Win />Object</Cell></th>
                            <th><Cell><TextIcon />Pattern</Cell></th>
                            <th><Cell><Funnel s={22} />Matching</Cell></th>
                            <th aria-label="Remove" />
                          </tr>
                        </thead>
                        <tbody>
                          <tr>
                            <td><Cell $pad={0} $gap={7}><Win /><CellSelect aria-label="Object type"><option>Table</option></CellSelect><CellDrop /></Cell></td>
                            <td><CellInput aria-label="Pattern" defaultValue="*tab*" /></td>
                            <td><Cell $pad={0}><CellSelect aria-label="Matching mode"><option>Wildcard</option></CellSelect><CellDrop /></Cell></td>
                            <td><Cell $center $pad={0}><PlainButton aria-label="Remove filter"><Trash /></PlainButton></Cell></td>
                          </tr>
                        </tbody>
                      </Table>
                    </TableView>
                    <Notice>
                      <Info />
                      <NoticeText>
                        Using a pattern in <b>wildcard</b> mode where no wildcard character <b>*</b> is present has the same
                        effect as performing an exact match search on the names or signatures.
                      </NoticeText>
                    </Notice>
                  </ListStack>
                </Group>
                <Grip />
                <Group title="Filtered objects" flex="1" open>
                  <TableView>
                    <Table $w="530px" $h="275px" $striped>
                      <colgroup><col width="17" /><col width="112" /><col width="90" /><col width="70" /><col width="136" /><col /></colgroup>
                      <thead>
                        <tr>
                          <th aria-label="Row" />
                          <th><Cell $pad={2}><Objects />Object<SortMark /></Cell></th>
                          <th><Cell><Blocks />Type</Cell></th>
                          <th><Cell><Oid />ID</Cell></th>
                          <th><Cell><Schema />Parent</Cell></th>
                          <th><Cell><Blocks />Parent type</Cell></th>
                        </tr>
                      </thead>
                      <tbody>
                        {objects.map(([name, id, parent]) => (
                          <tr key={name}>
                            <th scope="row"><Cell $pad={3}>{objects.findIndex((o) => o[0] === name) + 1}</Cell></th>
                            <td><Cell $gap={7}><Win />{name}</Cell></td>
                            <td><Cell $it $pad={4}>Table</Cell></td>
                            <td><Cell $pad={4}>{id}</Cell></td>
                            <td><Cell $gap={7} $it={parent === "public"} $red={parent === "public"}><Schema />{parent}</Cell></td>
                            <td><Cell $it $pad={4}>Schema</Cell></td>
                          </tr>
                        ))}
                      </tbody>
                    </Table>
                  </TableView>
                </Group>
              </RightCol>
            </Panel>
          </Stage>
          <Aside>
            <RunButton disabled><Transfer s={31} p={grey} />Generate</RunButton>
            <RunButton disabled><Ban />Cancel</RunButton>
          </Aside>
        </Main>
      </Frame>
    </Page>
  );
}
